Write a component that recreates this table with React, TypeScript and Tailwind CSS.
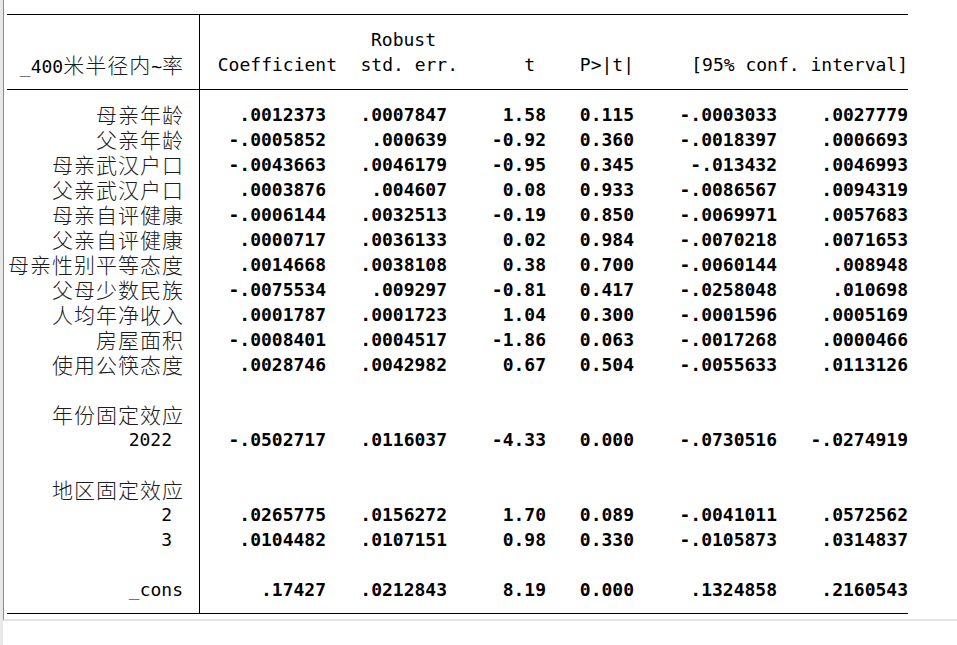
import React from 'react'

const MONO = "font-['DejaVu_Sans_Mono','Liberation_Mono',monospace] text-[18px] leading-[25px]"
const CJK = "font-['Noto_Sans_CJK_SC',sans-serif] text-[21px] leading-[25px] tracking-[1px] font-light text-[#1c1c1c]"

type Row =
  | { kind: 'blank' }
  | { kind: 'group'; label: string }
  | { kind: 'data'; label: string; level?: boolean; values: string[] }

const ROWS: Row[] = [
  { kind: 'data', label: '母亲年龄', values: ['.0012373', '.0007847', '1.58', '0.115', '-.0003033', '.0027779'] },
  { kind: 'data', label: '父亲年龄', values: ['-.0005852', '.000639', '-0.92', '0.360', '-.0018397', '.0006693'] },
  { kind: 'data', label: '母亲武汉户口', values: ['-.0043663', '.0046179', '-0.95', '0.345', '-.013432', '.0046993'] },
  { kind: 'data', label: '父亲武汉户口', values: ['.0003876', '.004607', '0.08', '0.933', '-.0086567', '.0094319'] },
  { kind: 'data', label: '母亲自评健康', values: ['-.0006144', '.0032513', '-0.19', '0.850', '-.0069971', '.0057683'] },
  { kind: 'data', label: '父亲自评健康', values: ['.0000717', '.0036133', '0.02', '0.984', '-.0070218', '.0071653'] },
  { kind: 'data', label: '母亲性别平等态度', values: ['.0014668', '.0038108', '0.38', '0.700', '-.0060144', '.008948'] },
  { kind: 'data', label: '父母少数民族', values: ['-.0075534', '.009297', '-0.81', '0.417', '-.0258048', '.010698'] },
  { kind: 'data', label: '人均年净收入', values: ['.0001787', '.0001723', '1.04', '0.300', '-.0001596', '.0005169'] },
  { kind: 'data', label: '房屋面积', values: ['-.0008401', '.0004517', '-1.86', '0.063', '-.0017268', '.0000466'] },
  { kind: 'data', label: '使用公筷态度', values: ['.0028746', '.0042982', '0.67', '0.504', '-.0055633', '.0113126'] },
  { kind: 'blank' },
  { kind: 'group', label: '年份固定效应' },
  { kind: 'data', label: '2022', level: true, values: ['-.0502717', '.0116037', '-4.33', '0.000', '-.0730516', '-.0274919'] },
  { kind: 'blank' },
  { kind: 'group', label: '地区固定效应' },
  { kind: 'data', label: '2', level: true, values: ['.0265775', '.0156272', '1.70', '0.089', '-.0041011', '.0572562'] },
  { kind: 'data', label: '3', level: true, values: ['.0104482', '.0107151', '0.98', '0.330', '-.0105873', '.0314837'] },
  { kind: 'blank' },
  { kind: 'data', label: '_cons', level: true, values: ['.17427', '.0212843', '8.19', '0.000', '.1324858', '.2160543'] },
]

// column widths (px) and right padding for numbers, measured off the Stata output
const COLS = [
  { w: 'w-[137px]', pr: 'pr-[11px]' },
  { w: 'w-[121px]', pr: 'pr-[11px]' },
  { w: 'w-[88px]', pr: 'pr-0' },
  { w: 'w-[88px]', pr: 'pr-0' },
  { w: 'w-[143px]', pr: 'pr-0' },
  { w: 'w-[131px]', pr: 'pr-0' },
]

function LabelCell({ children, className = '' }: { children?: React.ReactNode; className?: string }) {
  return (
    <div className={`w-[193px] shrink-0 border-r border-black text-right whitespace-pre ${className}`}>
      {children}
    </div>
  )
}

function Spacer({ h }: { h: string }) {
  return (
    <div className={`flex ${h}`}>
      <LabelCell />
    </div>
  )
}

function BodyRow({ row }: { row: Row }) {
  if (row.kind === 'blank') {
    return (
      <div className="flex h-[25px]">
        <LabelCell />
      </div>
    )
  }
  if (row.kind === 'group') {
    return (
      <div className="flex h-[25px]">
        <LabelCell className={`${CJK} pr-[15px]`}>{row.label}</LabelCell>
      </div>
    )
  }
  return (
    <div className="flex h-[25px]">
      {row.level ? (
        <LabelCell className={`${MONO} text-black ${row.label === '_cons' ? 'pr-[16px]' : 'pr-[27px]'}`}>
          {row.label}
        </LabelCell>
      ) : (
        <LabelCell className={`${CJK} pr-[15px]`}>{row.label}</LabelCell>
      )}
      {row.values.map((v, i) => (
        <div key={i} className={`${COLS[i].w} ${COLS[i].pr} ${MONO} font-bold text-right text-black`}>
          {v}
        </div>
      ))}
    </div>
  )
}

export default function App() {
  return (
    <div className="flex h-[645px] w-[957px] overflow-hidden bg-white">
      <div className="w-[3px] shrink-0 bg-[#e8e8e8]" />
      <div className="flex-1">
        <div className="h-[621px] border-b-2 border-l border-b-[#e4e4e4] border-l-[#8a8a8a] pt-[14px] pl-[3px]">
          <div className="w-[901px] border-y border-black">
            {/* header */}
            <Spacer h="h-[12px]" />
            <div className="flex h-[25px]">
              <LabelCell />
              <div className={`${COLS[0].w}`} />
              <div className={`${COLS[1].w} pr-[22px] text-right ${MONO} text-black`}>Robust</div>
            </div>
            <div className="flex h-[25px] leading-[25px]">
              <LabelCell className="pr-[15px] leading-[25px]">
                <span className={`${MONO} text-black`}>_400</span>
                <span className={CJK}>米半径内</span>
                <span className={`${MONO} text-black`}>~</span>
                <span className={CJK}>率</span>
              </LabelCell>
              <div className={`${COLS[0].w} text-right ${MONO} text-black`}>Coefficient</div>
              <div className={`${COLS[1].w} text-right ${MONO} text-black`}>std. err.</div>
              <div className={`${COLS[2].w} pr-[11px] text-right ${MONO} text-black`}>t</div>
              <div className={`${COLS[3].w} text-right ${MONO} text-black`}>P&gt;|t|</div>
              <div className={`w-[274px] text-right ${MONO} text-black`}>[95% conf. interval]</div>
            </div>
            <Spacer h="h-[12px]" />
            <div className="border-t border-black">
              <Spacer h="h-[12px]" />
              {ROWS.map((row, i) => (
                <BodyRow key={i} row={row} />
              ))}
              <Spacer h="h-[11px]" />
            </div>
          </div>
        </div>
      </div>
    </div>
  )
}
